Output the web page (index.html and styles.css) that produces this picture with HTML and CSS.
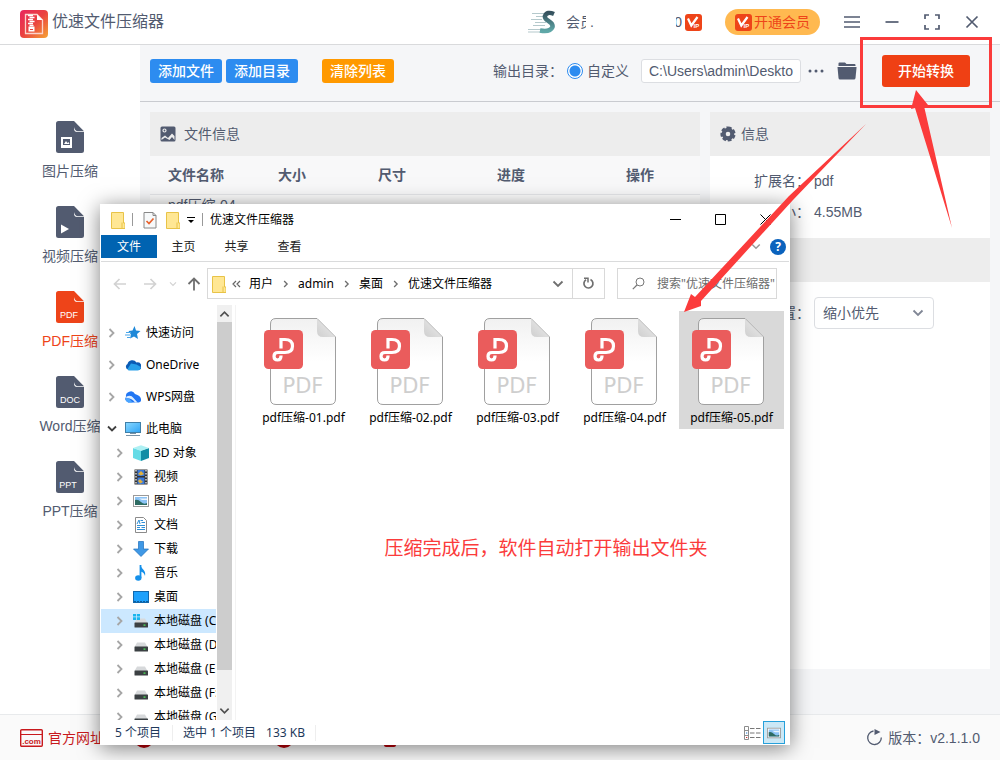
FILE: index.html
```html
<!DOCTYPE html>
<html lang="zh-CN">
<head>
<meta charset="utf-8">
<meta name="viewport" content="width=device-width, initial-scale=1">
<title>优速文件压缩器</title>
<link rel="stylesheet" href="styles.css">
</head>
<body>
<svg class="defs" aria-hidden="true">
  <defs>
    <linearGradient id="g-logo" x1="0" y1="0" x2="1" y2="1"><stop offset="0" stop-color="#e8265e"/><stop offset=".5" stop-color="#ea4240"/><stop offset="1" stop-color="#f6a535"/></linearGradient>
    <linearGradient id="g-page" x1="0" y1="0" x2="0" y2="1"><stop offset="0" stop-color="#f1f1f1"/><stop offset=".5" stop-color="#fff"/></linearGradient>
    <linearGradient id="g-fold" x1="1" y1="0" x2="0" y2="1"><stop offset="0" stop-color="#eee"/><stop offset="1" stop-color="#cfcfcf"/></linearGradient>
    <linearGradient id="g-screen" x1="0" y1="0" x2="1" y2="1"><stop offset="0" stop-color="#8ad8ff"/><stop offset="1" stop-color="#2fa4f5"/></linearGradient>
    <linearGradient id="g-s" x1="0" y1="0" x2="0" y2="1"><stop offset="0" stop-color="#36525e"/><stop offset="1" stop-color="#5fa8a8"/></linearGradient>
  </defs>
  <symbol id="file" viewBox="0 0 28 32"><path fill="currentColor" d="M2.500 0H18v7.500Q18 11 21.500 11H28V29.500Q28 32 25.500 32H2.500Q0 32 0 29.500V2.500Q0 0 2.500 0Z"/><path fill="currentColor" d="M18 0 28 10.200H21.500Q18.500 9.500 18 6Z"/></symbol>
  <symbol id="vip" viewBox="0 0 17 17"><rect width="17" height="17" rx="3" fill="#ee4419"/><path d="M3 4.500 6.300 11.500 12.500 3" fill="none" stroke="#fff" stroke-width="2.200"/><text x="8.500" y="13.500" font-size="6" font-weight="700" fill="#fff" font-family="Liberation Sans, sans-serif">IP</text></symbol>
  <symbol id="folder" viewBox="0 0 14 18"><path d="M.5 1.500H12.500V12H14V17.500H.5Z" fill="#ffe794" stroke="#e8c347"/><path d="M11 11.500V17" stroke="#e8c347"/></symbol>
  <symbol id="chev" viewBox="0 0 8 10"><path d="M1.500 1 5.500 5 1.500 9" fill="none" stroke="currentColor" stroke-width="1.800"/></symbol>
  <symbol id="down" viewBox="0 0 12 8"><path d="M1.500 1.500 6 6 10.500 1.500" fill="none" stroke="currentColor" stroke-width="1.800"/></symbol>
  <symbol id="arrow" viewBox="0 0 14 12"><path d="M13 6H1.500M6.500 1 1.500 6 6.500 11" fill="none" stroke="currentColor" stroke-width="1.700"/></symbol>
  <symbol id="gear" viewBox="0 0 16 16"><path fill="none" stroke="currentColor" stroke-width="3" stroke-dasharray="3.500 1.700" d="M8 1.900A6.100 6.100 0 1 1 7.990 1.900Z"/><circle cx="8" cy="8" r="4.300" fill="none" stroke="currentColor" stroke-width="4"/></symbol>
  <symbol id="disk" viewBox="0 0 16 16"><path d="M4 5.500H12L14.500 10H1.500Z" fill="#d7d9db"/><rect x="1.500" y="9.500" width="13.500" height="5" rx=".6" fill="#3b4043"/><rect x="10.500" y="11.500" width="2" height="1.200" fill="#4df05a"/></symbol>
  <symbol id="photo" viewBox="0 0 16 12"><rect x=".5" y=".5" width="15" height="11" fill="#fff" stroke="#9a9a9a"/><rect x="2" y="2" width="12" height="8" fill="#8cc3f5"/><path d="M2 5Q5 4 8 7T14 8V10H2Z" fill="#2d6b62"/><path d="M6 3.500H14V5H9Z" fill="#e9f4ff"/></symbol>
  <symbol id="pdf" viewBox="0 0 74 90"><path d="M12 1.500H53L71.500 20V82Q71.500 87.500 66 87.500H12Q6.500 87.500 6.500 82V7Q6.500 1.500 12 1.500Z" fill="url(#g-page)" stroke="#a0a0a0"/><path d="M53 2V14Q53 20 59 20H71Z" fill="url(#g-fold)"/><rect y="13" width="39" height="39" rx="4.500" fill="#ea5c5c"/><path d="M17 31.500V22.500H21Q28.500 22.500 28.500 29T21 35.500H14Q10 35.500 10 39.200T13.500 43Q17 43 17 39V38.500" fill="none" stroke="#fff" stroke-width="3.200"/><text class="ext" x="39" y="76">PDF</text></symbol>
</svg>

<div class="app">
  <header class="head">
    <svg class="logo" viewBox="0 0 28 28"><rect width="28" height="28" rx="4" fill="url(#g-logo)"/><path d="M5.500 4.500H17L22.500 10V23.500H5.500Z" fill="none" stroke="#fbd3cc" stroke-width="1.300"/><path d="M17 4.500V10H22.500Z" fill="#fff"/><path d="M8 5.500h5M9.500 7.500h5M8 9.500h5M9.500 11.500h5M8 13.500h5M9.500 15.500h4" stroke="#fff" stroke-width="1.300"/><rect x="8.500" y="16.500" width="6" height="5" fill="#fff"/><path d="M10 19.500h3" stroke="#e84340"/></svg>
    <h1 class="brand">优速文件压缩器</h1>
    <div class="account">
      <svg class="avatar" viewBox="0 0 28 24"><path d="M4 3.500H17M8 6.500H16M3 9.500H14M7 12.500H18M5 15.500H17M0 19.500H17M0 22H20" stroke="#b5c9cc" stroke-width="1"/><path d="M26 4Q19 1 17 6C15.500 11 26 11 24.500 17Q22 22.500 12 20.500" fill="none" stroke="url(#g-s)" stroke-width="4.500"/></svg>
      <span class="member">会员</span><span class="dot">.</span><span class="tail">0</span>
      <svg class="vip"><use href="#vip"/></svg>
    </div>
    <button class="pill"><svg class="vip"><use href="#vip"/></svg>开通会员</button>
    <div class="wctl">
      <button aria-label="菜单"><svg viewBox="0 0 16 16"><path d="M0 3h16M0 8h16M0 13h16"/></svg></button>
      <button aria-label="最小化"><svg viewBox="0 0 16 16"><path d="M1.500 8h13"/></svg></button>
      <button aria-label="最大化"><svg viewBox="0 0 16 16"><path d="M1 5V1h4M11 1h4v4M15 11v4h-4M5 15H1v-4"/></svg></button>
      <button aria-label="关闭"><svg viewBox="0 0 16 16"><path d="M2.500 2.500l11 11M13.500 2.500l-11 11"/></svg></button>
    </div>
  </header>

  <div class="body">
    <nav class="side">
      <button class="mode"><svg viewBox="0 0 28 32"><use href="#file"/><path d="M5 16h11v11H5z" fill="#fff"/><path d="M7 18h7v6H7z" fill="#525b70"/><path d="M8 23l2-3 1.500 2 1-1 1 2z" fill="#fff"/></svg>图片压缩</button>
      <button class="mode"><svg viewBox="0 0 28 32"><use href="#file"/><path d="M5 18.500 13 23 5 27.500Z" fill="#fff"/></svg>视频压缩</button>
      <button class="mode on"><svg viewBox="0 0 28 32"><use href="#file"/><text x="13" y="27">PDF</text></svg>PDF压缩</button>
      <button class="mode"><svg viewBox="0 0 28 32"><use href="#file"/><text x="14" y="27">DOC</text></svg>Word压缩</button>
      <button class="mode"><svg viewBox="0 0 28 32"><use href="#file"/><text x="12" y="27">PPT</text></svg>PPT压缩</button>
    </nav>

    <main class="main">
      <div class="tools">
        <button class="btn">添加文件</button>
        <button class="btn">添加目录</button>
        <button class="btn warn">清除列表</button>
        <div class="output">
          <span>输出目录：</span>
          <label class="radio"><input type="radio" name="out" checked>自定义</label>
          <input class="path" type="text" aria-label="输出目录" value="C:\Users\admin\Deskto">
          <button class="icon" aria-label="更多"><svg width="16" height="16" viewBox="0 0 16 16" fill="#525b70"><circle cx="2" cy="8" r="1.500"/><circle cx="8" cy="8" r="1.500"/><circle cx="14" cy="8" r="1.500"/></svg></button>
          <button class="icon open" aria-label="打开目录"><svg width="20" height="18" viewBox="0 0 20 18" fill="#525b70"><path d="M1.500 1.500Q1.500.5 2.500.5H8L9.500 2H17.500Q18.500 2 18.500 3V4H1.500Z"/><path d="M.5 5H19.500V6L18.500 16Q18.300 17.500 17 17.500H3Q1.700 17.500 1.500 16Z"/></svg></button>
          <button class="start">开始转换</button>
        </div>
      </div>

      <div class="panels">
        <section class="files">
          <h2 class="bar"><svg width="16" height="16" viewBox="0 0 16 16"><rect x=".5" y=".5" width="15" height="15" rx="1.500" fill="#525b70"/><circle cx="4.500" cy="4.500" r="1.500" fill="none" stroke="#ededed" stroke-width="1.200"/><path d="M1.500 14V12L5 9.500 8 12 12 7.500 14.500 10V14L12 11 9.500 14 5 11.500Z" fill="#ededed"/></svg>文件信息</h2>
          <table>
            <colgroup><col class="c1"><col class="c2"><col class="c2"><col class="c3"><col></colgroup>
            <thead><tr><th>文件名称</th><th>大小</th><th>尺寸</th><th>进度</th><th>操作</th></tr></thead>
            <tbody><tr><td>pdf压缩-04</td><td></td><td></td><td></td><td></td></tr></tbody>
          </table>
        </section>
        <section class="info">
          <h2 class="bar"><svg width="16" height="16"><use href="#gear"/></svg>信息</h2>
          <dl class="facts"><dt>扩展名：</dt><dd>pdf</dd><dt>大小：</dt><dd>4.55MB</dd></dl>
          <div class="bar"></div>
          <div class="setting"><label for="opt">设置：</label>
            <div class="pick"><select id="opt"><option>缩小优先</option></select><svg width="12" height="8"><use href="#down"/></svg></div>
          </div>
        </section>
      </div>
    </main>
  </div>

  <footer class="foot">
    <a class="site" href="#"><svg width="23" height="18" viewBox="0 0 23 18"><rect x=".7" y=".7" width="21.600" height="16.600" rx="1" fill="none" stroke="#c8191d" stroke-width="1.400"/><path d="M1 5.500H22" stroke="#c8191d"/><text x="11.500" y="14.500" text-anchor="middle" font-size="8" font-weight="700" font-family="Liberation Sans, sans-serif" fill="#c8191d">.com</text></svg>官方网址</a>
    <a class="round" href="#" aria-label="客服"></a>
    <a class="round second" href="#" aria-label="反馈"></a>
    <a class="square" href="#" aria-label="教程"></a>
    <span class="version"><svg width="17" height="17" viewBox="0 0 17 17"><path d="M7.500 2A6.800 6.800 0 1 0 15.300 8.500" fill="none" stroke="#525b70" stroke-width="1.300"/><path d="M8.500 0 14.500 3 8.500 6Z" fill="#525b70"/></svg>版本：v2.1.1.0</span>
  </footer>
</div>

<section class="win" aria-label="文件资源管理器">
  <div class="caption">
    <svg class="fold"><use href="#folder"/></svg><i class="sep"></i>
    <svg class="check" viewBox="0 0 14 18"><path d="M1 1.500H10L13 4.500V17H1Z" fill="#f7f9fa" stroke="#888"/><path d="M10 1.500V4.500H13" fill="none" stroke="#888"/><path d="M3.500 10 6 12.500 10.500 7.500" fill="none" stroke="#e8612c" stroke-width="1.700"/></svg>
    <svg class="fold"><use href="#folder"/></svg>
    <svg class="drop" viewBox="0 0 8 8"><path d="M0 1.500H8" stroke="#000"/><path d="M1 4H7L4 7Z"/></svg><i class="sep"></i>
    <span>优速文件压缩器</span>
    <div class="winctl">
      <button aria-label="最小化"><svg viewBox="0 0 11 11"><path d="M0 5.500H11"/></svg></button>
      <button aria-label="最大化"><svg viewBox="0 0 11 11"><path d="M.5.5H10.500V10.500H.5Z"/></svg></button>
      <button aria-label="关闭"><svg viewBox="0 0 11 11"><path d="M.5.5l10 10M10.500.5l-10 10"/></svg></button>
    </div>
  </div>
  <div class="ribbon">
    <button class="tab act">文件</button><button class="tab">主页</button><button class="tab">共享</button><button class="tab">查看</button>
    <svg class="fold-rib" width="10" height="7"><use href="#down"/></svg>
    <button class="help" aria-label="帮助">?</button>
  </div>
  <div class="nav">
    <button class="go dim" aria-label="后退"><svg width="14" height="12"><use href="#arrow"/></svg></button>
    <button class="go dim" aria-label="前进"><svg class="fwd" width="14" height="12"><use href="#arrow"/></svg></button>
    <button class="hist dim" aria-label="历史"><svg width="8" height="6"><use href="#down"/></svg></button>
    <button class="go" aria-label="上移"><svg width="14" height="14" viewBox="0 0 14 14"><path d="M7 13.500V1.500M1.500 7 7 1.500 12.500 7" fill="none" stroke="#6f6f6f" stroke-width="1.800"/></svg></button>
    <div class="addr">
      <svg class="fold"><use href="#folder"/></svg><svg class="dbl" viewBox="0 0 9 8"><path d="M4 1 1 4 4 7M8 1 5 4 8 7" fill="none" stroke="#666" stroke-width="1.200"/></svg>
      <span>用户</span><svg class="sm"><use href="#chev"/></svg><span>admin</span><svg class="sm"><use href="#chev"/></svg><span>桌面</span><svg class="sm"><use href="#chev"/></svg><span>优速文件压缩器</span>
      <svg class="more" width="12" height="8"><use href="#down"/></svg>
      <button class="reload" aria-label="刷新"><svg width="13" height="13" viewBox="0 0 13 13"><path d="M8.500 2.500A4.500 4.500 0 1 1 4 2.700" fill="none" stroke="#6f6f6f" stroke-width="1.700"/><path d="M2 1.200H6V5.500" fill="none" stroke="#6f6f6f" stroke-width="1.500"/></svg></button>
    </div>
    <div class="search"><svg width="13" height="13" viewBox="0 0 13 13"><circle cx="8" cy="5" r="4" fill="none" stroke="#777"/><path d="M5 8 .8 12.200" stroke="#777" stroke-width="1.200"/></svg><input type="text" aria-label="搜索" placeholder='搜索"优速文件压缩器"'></div>
  </div>
  <div class="view">
    <ul class="tree">
      <li class="top"><svg class="tw"><use href="#chev"/></svg><svg class="ic" viewBox="0 0 16 16"><path d="M9.500 1 11 5.500 15.500 6 12 9 13 14 9 11.500 5 13.500 6 9.500 3.500 6 7.500 5.500Z" fill="#1e88d8"/><path d="M1 7.500H6M0 10H5.500M2 12.500H5" stroke="#4aa6e8"/></svg>快速访问</li>
      <li class="top"><svg class="tw"><use href="#chev"/></svg><svg class="ic" viewBox="0 0 16 16"><path d="M3 12.500A3 3 0 0 1 2.500 7 5 5 0 0 1 11.500 5.500 3.600 3.600 0 0 1 13.500 13H3Z" fill="#0a5bb5"/><path d="M6 6.500 11.500 7.500 15.800 10Q15.500 13.500 12.500 13.500H3.500L2.500 12Z" fill="#28a0ea"/></svg>OneDrive</li>
      <li class="top"><svg class="tw"><use href="#chev"/></svg><svg class="ic" viewBox="0 0 16 16"><path d="M3 13A3 3 0 0 1 1 8 4.800 4.800 0 0 1 10 5Q15.500 6.500 16 10T12.500 13.500H3Z" fill="#2176f3"/><path d="M1.500 7.500Q6 5.500 8.500 9L12.500 13.500H10Q6 8.500 1 9.500Z" fill="#dcedff"/><path d="M.5 9.500Q4 8 7.500 13.500H3Q.5 12.500.5 9.500Z" fill="#4aa5ff"/></svg>WPS网盘</li>
      <li class="top"><svg class="tw open"><use href="#chev"/></svg><svg class="ic" viewBox="0 0 16 16"><rect x=".5" y="1.500" width="15" height="10" fill="url(#g-screen)" stroke="#3f7fa8"/><path d="M5 12.500H11M1 14.500H15" stroke="#7892a6"/></svg>此电脑</li>
      <li><svg class="tw"><use href="#chev"/></svg><svg class="ic" viewBox="0 0 16 16"><path d="M0 3 8 5.500V16L0 13Z" fill="#65dbe6"/><path d="M16 3 8 5.500V16L16 13Z" fill="#138da5"/><path d="M0 3 8 .3 16 3 8 6Z" fill="#aef0f3"/></svg>3D 对象</li>
      <li><svg class="tw"><use href="#chev"/></svg><svg class="ic" viewBox="0 0 16 16"><path d="M1.500.5H14.500V15.500H1.500Z" fill="#333"/><path d="M4.500 1H11.500V7H4.500ZM4.500 8.500H11.500V15H4.500Z" fill="#3b78d8"/><path d="M5 5 8 2 11 5 8 6.500ZM5 12 7 10 10 13 7 14.500Z" fill="#e2b13b"/><path d="M3 1V16M13 1V16" stroke="#fff" stroke-width="1.200" stroke-dasharray="1.500 1.500"/></svg>视频</li>
      <li><svg class="tw"><use href="#chev"/></svg><svg class="ic"><use href="#photo"/></svg>图片</li>
      <li><svg class="tw"><use href="#chev"/></svg><svg class="ic" viewBox="0 0 16 16"><path d="M2.500.5H10.500L13.500 3.500V15.500H2.500Z" fill="#fff" stroke="#8b8b8b"/><path d="M7.500 3.500H10M8.500 5.500H12M4 8.500H12M4 10.500H7M8.500 10.500H12M4 12.500H12" stroke="#2f8fd6"/><path d="M4 7 6 3 7 7" fill="none" stroke="#2f8fd6"/></svg>文档</li>
      <li><svg class="tw"><use href="#chev"/></svg><svg class="ic" viewBox="0 0 16 16"><path d="M5.500.5H10.500V8H15.500L8 15.500.5 8H5.500Z" fill="#3f98e5" stroke="#1d70bd" stroke-width=".7"/></svg>下载</li>
      <li><svg class="tw"><use href="#chev"/></svg><svg class="ic" viewBox="0 0 16 16"><path d="M7.500 0V13" stroke="#1590ea" stroke-width="1.800"/><ellipse cx="5.300" cy="13" rx="3.200" ry="2.700" fill="#1590ea"/><path d="M7.500 0C8 4 13.500 5 12 11 11 7.500 9.500 7 7.500 6.500Z" fill="#1590ea"/></svg>音乐</li>
      <li><svg class="tw"><use href="#chev"/></svg><svg class="ic" viewBox="0 0 16 16"><rect x=".5" y="2.500" width="15" height="11" fill="#1ea1fc" stroke="#1168ad"/><path d="M1 12.500H15" stroke="#0b5d9d" stroke-dasharray="2 1"/></svg>桌面</li>
      <li class="sel"><svg class="tw"><use href="#chev"/></svg><svg class="ic" viewBox="0 0 16 16"><use href="#disk"/><path d="M0 1H3V3.500H0ZM3.800 1H7V3.500H3.800ZM0 4.300H3V7H0ZM3.800 4.300H7V7H3.800Z" fill="#19b5ee"/></svg>本地磁盘 (C:)</li>
      <li><svg class="tw"><use href="#chev"/></svg><svg class="ic"><use href="#disk"/></svg>本地磁盘 (D:)</li>
      <li><svg class="tw"><use href="#chev"/></svg><svg class="ic"><use href="#disk"/></svg>本地磁盘 (E:)</li>
      <li><svg class="tw"><use href="#chev"/></svg><svg class="ic"><use href="#disk"/></svg>本地磁盘 (F:)</li>
      <li><svg class="tw"><use href="#chev"/></svg><svg class="ic"><use href="#disk"/></svg>本地磁盘 (G:)</li>
    </ul>
    <div class="scroll"><svg class="up" width="11" height="8"><use href="#down"/></svg><div class="thumb"></div><svg width="11" height="8"><use href="#down"/></svg></div>
    <div class="pane">
      <div class="grid">
        <figure class="item"><svg><use href="#pdf"/></svg><figcaption>pdf压缩-01.pdf</figcaption></figure>
        <figure class="item"><svg><use href="#pdf"/></svg><figcaption>pdf压缩-02.pdf</figcaption></figure>
        <figure class="item"><svg><use href="#pdf"/></svg><figcaption>pdf压缩-03.pdf</figcaption></figure>
        <figure class="item"><svg><use href="#pdf"/></svg><figcaption>pdf压缩-04.pdf</figcaption></figure>
        <figure class="item picked"><svg><use href="#pdf"/></svg><figcaption>pdf压缩-05.pdf</figcaption></figure>
      </div>
      <p class="note">压缩完成后，软件自动打开输出文件夹</p>
    </div>
  </div>
  <div class="status">
    <span>5 个项目</span><span class="chosen">选中 1 个项目</span><span class="size">133 KB</span>
    <div class="modes">
      <button aria-label="详细信息"><svg width="17" height="14" viewBox="0 0 17 14" fill="none" stroke="#8c8c8c"><path d="M.5.5H4.500V13.500H.5ZM.5 4.500H4.500M.5 9.500H4.500"/><path d="M6 2.500H10.500M12 2.500H16.500M6 7H10.500M12 7H16.500M6 11.500H10.500M12 11.500H16.500" stroke="#777"/><path d="M2 7H3.300" stroke="#2478d0"/><path d="M2 11.500H3.300" stroke="#d03030"/></svg></button>
      <button class="now" aria-label="大图标"><svg width="14" height="12"><use href="#photo"/></svg></button>
    </div>
  </div>
</section>

<div class="frame"></div>
<svg class="arrows" viewBox="0 0 1000 760" fill="#fb3b3b" aria-hidden="true">
  <path d="M684 312 691 294 695 297 789 196 866 124 793 200 701 301 701 306Z"/>
  <path d="M916 90 928 105 924 106 952 228 915 108 911 109Z"/>
</svg>
</body>
</html>
```
FILE: styles.css
```css
* { box-sizing: border-box; }
body {
  margin: 0;
  position: relative;
  color: #525b70;
  font: 14px/20px "Liberation Sans", "Noto Sans CJK SC", sans-serif;
}
button, input, select { font: inherit; color: inherit; }
button { padding: 0; border: 0; background: none; }
svg { flex: none; display: block; }
.defs { position: absolute; width: 0; height: 0; }
h1, h2, p, ul, dl, dd, figure { margin: 0; padding: 0; }
h1, h2 { font-weight: 400; }

.app { display: flex; flex-direction: column; height: 100vh; background: #f5f6f8; }

/* header */
.head {
  display: flex;
  align-items: center;
  height: 45px;
  padding: 0 20px;
  background: #fff;
  border-bottom: 1px solid #d9dadc;
}
.logo { width: 28px; height: 28px; margin-top: 3px; }
.brand { margin-left: 4px; font-size: 16px; line-height: 24px; }
.account { display: flex; align-items: center; margin-left: auto; }
.avatar { width: 28px; height: 24px; margin-right: 10px; }
.member { width: 20px; overflow: hidden; white-space: nowrap; }
.dot { width: 90px; padding-left: 4px; }
.tail { display: flex; justify-content: flex-end; width: 6px; margin-right: 3px; overflow: hidden; }
.vip { width: 17px; height: 17px; }
.pill {
  display: flex;
  align-items: center;
  gap: 2px;
  height: 26px;
  margin-left: 23px;
  padding: 0 10px;
  border-radius: 13px;
  background: #ffb950;
  color: #ee4419;
}
.wctl { display: flex; gap: 24px; margin-left: 24px; }
.wctl svg { width: 16px; height: 16px; fill: none; stroke: #525b70; stroke-width: 1.7; }

/* side navigation */
.body { display: flex; flex: 1; min-height: 0; }
.side {
  display: flex;
  flex-direction: column;
  align-items: center;
  gap: 25px;
  width: 140px;
  padding-top: 76px;
  background: #fff;
}
.mode { display: flex; flex-direction: column; align-items: center; gap: 8px; }
.mode svg { width: 28px; height: 32px; }
.mode text { font: 9px "Liberation Sans", sans-serif; fill: #fff; text-anchor: middle; }
.mode.on { color: #ee4419; }
.main { display: flex; flex-direction: column; flex: 1; min-width: 0; }

/* toolbar */
.tools {
  display: flex;
  align-items: center;
  gap: 4px;
  height: 57px;
  padding: 0 30px 4px 10px;
  border-bottom: 1px solid #c9cbd0;
}
.btn { width: 72px; height: 24px; border-radius: 3px; background: #2d8cf0; color: #fff; font-weight: 500; }
.warn { margin-left: 20px; background: #f90; }
.output { display: flex; align-items: center; margin-left: auto; }
.radio { display: flex; align-items: center; gap: 4px; margin: 0 12px 0 4px; }
.radio input {
  width: 16px;
  height: 16px;
  margin: 0;
  appearance: none;
  border: 1px solid #2d8cf0;
  border-radius: 50%;
  background: radial-gradient(circle, #2d8cf0 5px, #fff 6px);
}
.path { width: 160px; height: 24px; padding: 0 4px 0 7px; border: 1px solid #dcdee2; border-radius: 3px; background: #fff; }
.icon { margin-left: 7px; }
.open { margin-left: 13px; }
.start { width: 88px; height: 32px; margin-left: 25px; border-radius: 3px; background: #ef4014; color: #fff; font-weight: 500; }

/* panels */
.panels { display: flex; flex: 1; gap: 10px; padding: 10px 10px 45px; }
.files { flex: 1; background: #fff; }
.info { width: 280px; background: #fff; }
.bar { display: flex; align-items: center; height: 44px; padding: 0 10px; background: #ededed; font-size: 14px; }
.files .bar { gap: 8px; }
.info .bar { gap: 5px; }
table { width: 100%; border-collapse: collapse; table-layout: fixed; }
.c1 { width: 92px; }
.c2 { width: 100px; }
.c3 { width: 138px; }
th { height: 38px; padding: 0; background: #f8f8f9; border-bottom: 1px solid #e6e7ea; }
td { height: 30px; padding: 0 0 0 18px; vertical-align: top; white-space: nowrap; background: #fcfcfc; }
.facts {
  display: grid;
  grid-template-columns: 100px 1fr;
  align-content: start;
  gap: 11px 4px;
  height: 82px;
  padding-top: 15px;
}
.facts dt, .setting label { text-align: right; }
.setting { display: grid; grid-template-columns: 100px 120px; gap: 4px; align-items: center; padding-top: 15px; }
.pick { position: relative; }
.pick select { width: 100%; height: 32px; padding: 0 8px; appearance: none; border: 1px solid #dcdee2; border-radius: 4px; background: #fff; }
.pick svg { position: absolute; right: 10px; top: 12px; color: #808695; }

/* footer */
.foot { display: flex; align-items: center; height: 46px; padding: 0 20px; background: #fafafa; border-top: 1px solid #e8eaec; }
.site { display: flex; align-items: center; gap: 5px; color: #c8191d; text-decoration: none; }
.round { width: 20px; height: 20px; margin-left: 30px; border-radius: 50%; background: #b80008; }
.second { margin-left: 120px; }
.square { width: 12px; height: 18px; margin-left: 90px; border-radius: 2px; background: #b80008; }
.version { display: flex; align-items: center; gap: 5px; margin-left: auto; }

/* file manager window */
.win {
  position: absolute;
  top: 204px;
  right: 210px;
  bottom: 15px;
  left: 100px;
  display: flex;
  flex-direction: column;
  padding: 0 1px;
  background: #fff;
  box-shadow: 0 3px 20px rgba(0, 0, 0, .5);
  color: #000;
  font: 12px/16px "Noto Sans", "Noto Sans CJK SC", sans-serif;
}
.fold { width: 14px; height: 18px; }
.caption { display: flex; align-items: center; height: 31px; padding-left: 10px; }
.caption .sep { width: 1px; height: 13px; margin: 0 7px; background: #999; }
.check { width: 14px; height: 18px; margin: 0 9px 0 3px; }
.drop { width: 8px; height: 8px; margin-left: 7px; }
.winctl { display: flex; gap: 34px; margin-left: auto; padding-right: 18px; }
.winctl svg { width: 11px; height: 11px; fill: none; stroke: #000; }
.ribbon { display: flex; align-items: center; height: 27px; padding-bottom: 3px; border-bottom: 1px solid #dadbdc; }
.tab { width: 53px; height: 23px; color: #222; }
.act { width: 56px; background: #0063b1; color: #fff; }
.fold-rib { margin-left: auto; margin-right: 9px; color: #999; }
.help { width: 16px; height: 16px; margin-right: 3px; border-radius: 50%; background: #0a62bd; color: #fff; font-weight: 700; }
.nav { display: flex; align-items: center; height: 43px; padding: 0 12px; }
.go { width: 14px; margin-right: 16px; }
.nav .dim { color: #d2d2d2; }
.fwd { transform: scaleX(-1); }
.hist { margin: 0 10px 0 -4px; }
.nav .hist + .go { margin-right: 6px; }
.addr { display: flex; flex: 1; align-items: center; height: 31px; padding-left: 4px; border: 1px solid #d9d9d9; }
.dbl { width: 9px; height: 8px; margin: 0 8px 0 6px; }
.sm { width: 6px; height: 8px; margin: 0 9px 0 10px; color: #6f6f6f; }
.more { margin-left: auto; margin-right: 8px; color: #6f6f6f; }
.reload { display: grid; place-items: center; width: 32px; height: 29px; border-left: 1px solid #d9d9d9; }
.search { display: flex; align-items: center; gap: 12px; width: 160px; height: 31px; margin-left: 12px; padding-left: 14px; border: 1px solid #d9d9d9; overflow: hidden; }
.search input { flex: 1; min-width: 0; padding: 0; border: 0; background: none; }
.search input::placeholder { color: #6d6d6d; opacity: 1; }

.view { display: flex; flex: 1; min-height: 0; }
.tree { width: 115px; padding-top: 16px; overflow: hidden; list-style: none; }
.tree li { display: flex; align-items: center; height: 24px; padding-left: 15px; white-space: nowrap; }
.tree .top { padding-left: 7px; margin-bottom: 8px; }
.tree .top:nth-child(4) { margin-bottom: 0; }
.tree .sel { background: #cce8ff; }
.tw { width: 8px; height: 10px; margin-right: 9px; color: #a6a6a6; }
.tw.open { margin-left: 0; color: #404040; transform: rotate(90deg); }
.ic { width: 16px; height: 16px; margin-right: 5px; }
.scroll { display: flex; flex-direction: column; align-items: center; width: 15px; margin-left: 1px; padding: 5px 0; background: #f0f0f0; color: #505050; }
.up { transform: scaleY(-1); }
.thumb { width: 15px; flex: 1; margin: 4px 0 37px; background: #cdcdcd; }
.pane { flex: 1; margin-left: 3px; padding: 6px 5px 0 15px; border-left: 1px solid #f3f3f3; }
.grid { display: flex; gap: 2px; }
.item { width: 105px; height: 118px; padding-top: 6px; text-align: center; }
.item svg { width: 74px; height: 90px; margin: 0 0 3px 13px; }
.ext { font: 21px "DejaVu Sans", sans-serif; fill: #cecece; text-anchor: middle; }
.picked { background: #d9d9d9; }
.note { margin-top: 106px; padding-left: 57px; color: #fb3b3b; font-size: 19px; line-height: 26px; text-align: center; }

.status { display: flex; align-items: center; height: 25px; padding: 0 4px 0 14px; color: #1e395b; }
.chosen { margin-left: 11px; padding-left: 10px; border-left: 1px solid #eee; }
.size { margin-left: 10px; padding-right: 10px; border-right: 1px solid #eee; }
.modes { display: flex; align-items: center; gap: 2px; margin-left: auto; }
.now { display: grid; place-items: center; width: 22px; height: 23px; border: 1px solid #26a0da; background: #cbe8f6; }

/* annotations */
.frame { position: absolute; top: 37px; right: 8px; width: 132px; height: 71px; border: 3px solid #fb3b3b; pointer-events: none; }
.arrows { position: absolute; top: 0; right: 0; width: 1000px; height: 760px; pointer-events: none; }
```
